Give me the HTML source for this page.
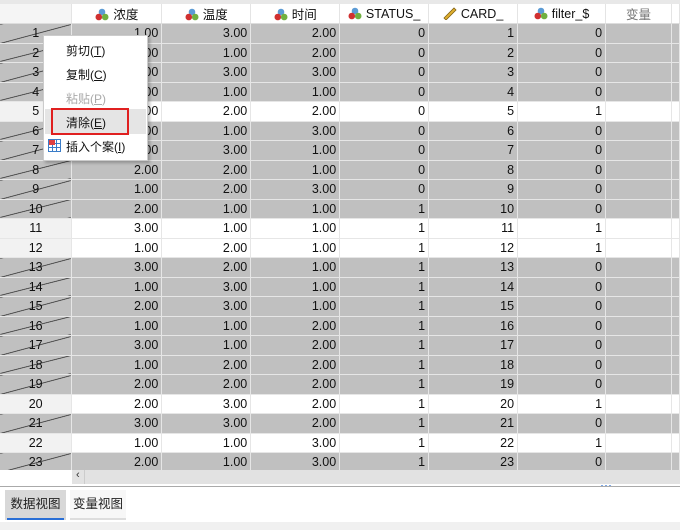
<!DOCTYPE html>
<html><head><meta charset="utf-8"><style>
body{margin:0;width:680px;height:530px;overflow:hidden;background:#fff;font-family:"Liberation Sans","Noto Sans CJK SC",sans-serif;position:relative}
.top{position:absolute;left:0;top:0;width:680px;height:4px;background:#e8e8e8}
table{position:absolute;left:0;top:4px;border-collapse:collapse;table-layout:fixed;font-size:12.5px}
td,th{padding:0 3px;height:19.5px;box-sizing:border-box;border-right:1px solid #e6e6e6;border-bottom:1px solid #e6e6e6;text-align:right;white-space:nowrap;overflow:hidden;color:#111}
th{font-weight:normal;text-align:center;background:#fff;border-right:1px solid #e4e4e4;font-size:12.5px;border-bottom:1px solid #ddd}
th.rh{background:#f5f5f5}
td.rh{text-align:center;background:#f2f2f2}
tr.s td{background:#c0c0c0}
tr.s td.rh{background:#c0c0c0 linear-gradient(to bottom right,transparent calc(50% - .7px),#222 50%,transparent calc(50% + .7px))}
td.e{background:#fff}
.ic{display:inline-block;width:14px;height:13px;vertical-align:-2px;margin-right:4px}
.menu{position:absolute;left:43px;top:35px;width:103px;height:124px;background:#fff;border:1px solid #ccc;box-shadow:2px 2px 3px rgba(0,0,0,.25);font-size:12px;font-family:"Liberation Sans","Noto Sans CJK SC",sans-serif}
.mi{position:absolute;left:22px;color:#111}
.scroll{position:absolute;left:72px;top:470px;width:608px;height:14px;background:#e2e2e2}
.tabs{position:absolute;left:0;top:486px;width:680px;height:36px;border-top:1px solid #aaa;background:#fff}
.bot{position:absolute;left:0;top:522px;width:680px;height:8px;background:#f0f0f0}
</style></head><body>
<div class="top"></div>
<table>
<colgroup><col style="width:72px"><col style="width:90px"><col style="width:89px"><col style="width:89px"><col style="width:89px"><col style="width:89px"><col style="width:88px"><col style="width:66px"><col style="width:8px"></colgroup>
<tr><th class="rh"></th>
<th><svg class="ic" viewBox="0 0 14 13"><circle cx="7" cy="4" r="3.3" fill="#5b9bd5"/><circle cx="3.8" cy="9" r="3.3" fill="#d03030"/><circle cx="10.2" cy="9" r="3.3" fill="#70b040"/></svg>浓度</th>
<th><svg class="ic" viewBox="0 0 14 13"><circle cx="7" cy="4" r="3.3" fill="#5b9bd5"/><circle cx="3.8" cy="9" r="3.3" fill="#d03030"/><circle cx="10.2" cy="9" r="3.3" fill="#70b040"/></svg>温度</th>
<th><svg class="ic" viewBox="0 0 14 13"><circle cx="7" cy="4" r="3.3" fill="#5b9bd5"/><circle cx="3.8" cy="9" r="3.3" fill="#d03030"/><circle cx="10.2" cy="9" r="3.3" fill="#70b040"/></svg>时间</th>
<th><svg class="ic" viewBox="0 0 14 13"><circle cx="7" cy="4" r="3.3" fill="#5b9bd5"/><circle cx="3.8" cy="9" r="3.3" fill="#d03030"/><circle cx="10.2" cy="9" r="3.3" fill="#70b040"/></svg>STATUS_</th>
<th><svg class="ic" viewBox="0 0 14 13"><path d="M1 11 L11 1 L13 3 L3 13 Z" fill="#e0b030" stroke="#806010" stroke-width=".8"/></svg>CARD_</th>
<th><svg class="ic" viewBox="0 0 14 13"><circle cx="7" cy="4" r="3.3" fill="#5b9bd5"/><circle cx="3.8" cy="9" r="3.3" fill="#d03030"/><circle cx="10.2" cy="9" r="3.3" fill="#70b040"/></svg>filter_$</th>
<th style="color:#777">变量</th><th></th></tr>
<tr class="s"><td class="rh">1</td><td>1.00</td><td>3.00</td><td>2.00</td><td>0</td><td>1</td><td>0</td><td></td><td class="e"></td></tr>
<tr class="s"><td class="rh">2</td><td>1.00</td><td>1.00</td><td>2.00</td><td>0</td><td>2</td><td>0</td><td></td><td class="e"></td></tr>
<tr class="s"><td class="rh">3</td><td>1.00</td><td>3.00</td><td>3.00</td><td>0</td><td>3</td><td>0</td><td></td><td class="e"></td></tr>
<tr class="s"><td class="rh">4</td><td>1.00</td><td>1.00</td><td>1.00</td><td>0</td><td>4</td><td>0</td><td></td><td class="e"></td></tr>
<tr><td class="rh">5</td><td>1.00</td><td>2.00</td><td>2.00</td><td>0</td><td>5</td><td>1</td><td></td><td></td></tr>
<tr class="s"><td class="rh">6</td><td>1.00</td><td>1.00</td><td>3.00</td><td>0</td><td>6</td><td>0</td><td></td><td class="e"></td></tr>
<tr class="s"><td class="rh">7</td><td>1.00</td><td>3.00</td><td>1.00</td><td>0</td><td>7</td><td>0</td><td></td><td class="e"></td></tr>
<tr class="s"><td class="rh">8</td><td>2.00</td><td>2.00</td><td>1.00</td><td>0</td><td>8</td><td>0</td><td></td><td class="e"></td></tr>
<tr class="s"><td class="rh">9</td><td>1.00</td><td>2.00</td><td>3.00</td><td>0</td><td>9</td><td>0</td><td></td><td class="e"></td></tr>
<tr class="s"><td class="rh">10</td><td>2.00</td><td>1.00</td><td>1.00</td><td>1</td><td>10</td><td>0</td><td></td><td class="e"></td></tr>
<tr><td class="rh">11</td><td>3.00</td><td>1.00</td><td>1.00</td><td>1</td><td>11</td><td>1</td><td></td><td></td></tr>
<tr><td class="rh">12</td><td>1.00</td><td>2.00</td><td>1.00</td><td>1</td><td>12</td><td>1</td><td></td><td></td></tr>
<tr class="s"><td class="rh">13</td><td>3.00</td><td>2.00</td><td>1.00</td><td>1</td><td>13</td><td>0</td><td></td><td class="e"></td></tr>
<tr class="s"><td class="rh">14</td><td>1.00</td><td>3.00</td><td>1.00</td><td>1</td><td>14</td><td>0</td><td></td><td class="e"></td></tr>
<tr class="s"><td class="rh">15</td><td>2.00</td><td>3.00</td><td>1.00</td><td>1</td><td>15</td><td>0</td><td></td><td class="e"></td></tr>
<tr class="s"><td class="rh">16</td><td>1.00</td><td>1.00</td><td>2.00</td><td>1</td><td>16</td><td>0</td><td></td><td class="e"></td></tr>
<tr class="s"><td class="rh">17</td><td>3.00</td><td>1.00</td><td>2.00</td><td>1</td><td>17</td><td>0</td><td></td><td class="e"></td></tr>
<tr class="s"><td class="rh">18</td><td>1.00</td><td>2.00</td><td>2.00</td><td>1</td><td>18</td><td>0</td><td></td><td class="e"></td></tr>
<tr class="s"><td class="rh">19</td><td>2.00</td><td>2.00</td><td>2.00</td><td>1</td><td>19</td><td>0</td><td></td><td class="e"></td></tr>
<tr><td class="rh">20</td><td>2.00</td><td>3.00</td><td>2.00</td><td>1</td><td>20</td><td>1</td><td></td><td></td></tr>
<tr class="s"><td class="rh">21</td><td>3.00</td><td>3.00</td><td>2.00</td><td>1</td><td>21</td><td>0</td><td></td><td class="e"></td></tr>
<tr><td class="rh">22</td><td>1.00</td><td>1.00</td><td>3.00</td><td>1</td><td>22</td><td>1</td><td></td><td></td></tr>
<tr class="s"><td class="rh">23</td><td>2.00</td><td>1.00</td><td>3.00</td><td>1</td><td>23</td><td>0</td><td></td><td class="e"></td></tr>
</table>
<div class="menu">
<div class="mi" style="top:6px">剪切(<u>T</u>)</div>
<div class="mi" style="top:30px">复制(<u>C</u>)</div>
<div class="mi" style="top:54px;color:#aaa">粘贴(<u>P</u>)</div>
<div style="position:absolute;left:1px;top:73px;width:101px;height:25px;background:#e5e5e5"></div>
<div style="position:absolute;left:7px;top:72px;width:78px;height:27px;border:2px solid #e02020;box-sizing:border-box"></div>
<div class="mi" style="top:78px">清除(<u>E</u>)</div>
<svg style="position:absolute;left:4px;top:103px" width="13" height="13" viewBox="0 0 13 13"><rect x=".5" y=".5" width="12" height="12" fill="#fff" stroke="#3a7cc8"/><path d="M0.5 4.5H12.5M0.5 8.5H12.5M4.5 .5V12.5M8.5 .5V12.5" stroke="#3a7cc8"/><rect x="1" y="1" width="6" height="5" fill="#e04040"/></svg>
<div class="mi" style="top:102px">插入个案(<u>I</u>)</div>
</div>
<div style="position:absolute;left:0;top:470px;width:72px;height:14px;background:#fff"></div>
<div class="scroll"><span style="position:absolute;left:4px;top:-1px;font-size:11px;color:#333">‹</span><div style="position:absolute;left:12px;top:0;width:1px;height:14px;background:#ccc"></div></div>
<div style="position:absolute;left:600px;top:485px;width:12px;height:3px;background:radial-gradient(circle,#2a6fd6 1px,transparent 1.5px) 0 0/4px 3px repeat-x"></div>
<div class="tabs">
<div style="position:absolute;left:5px;top:3px;width:61px;height:30px;background:#d8d8d8;font-size:12.5px;line-height:28px;text-align:center;color:#222">数据视图<div style="position:absolute;left:2px;bottom:0;width:57px;height:2px;background:#2a6fd6"></div></div>
<div style="position:absolute;left:70px;top:3px;width:56px;height:30px;background:#f7f7f7;font-size:12.5px;line-height:28px;text-align:center;color:#222">变量视图<div style="position:absolute;left:0;bottom:0;width:56px;height:2px;background:#ddd"></div></div>
</div>
<div class="bot"></div>
</body></html>
